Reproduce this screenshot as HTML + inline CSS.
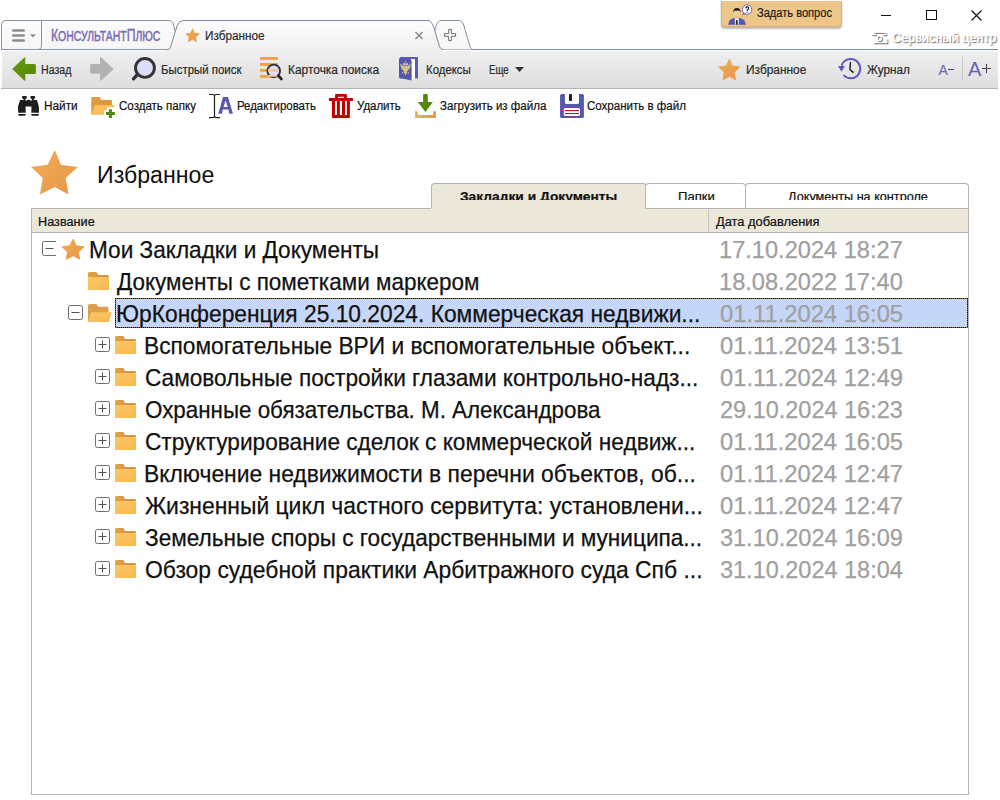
<!DOCTYPE html>
<html><head><meta charset="utf-8"><style>
html,body{margin:0;padding:0;width:1000px;height:800px;overflow:hidden;background:#fff;}
body{position:relative;font-family:"Liberation Sans", sans-serif;}
.t{position:absolute;white-space:pre;}
.a{position:absolute;}
svg{position:absolute;overflow:visible;}
</style></head><body>
<svg class="a" style="left:0;top:0" width="1000" height="52" viewBox="0 0 1000 52">
<defs>
<linearGradient id="tabg" x1="0" y1="0" x2="0" y2="1"><stop offset="0" stop-color="#fdfdfd"/><stop offset="1" stop-color="#f1f1f1"/></linearGradient>
<linearGradient id="tabi" x1="0" y1="0" x2="0" y2="1"><stop offset="0" stop-color="#fcfcfc"/><stop offset="1" stop-color="#f6f6f6"/></linearGradient>
</defs>
<!-- bottom line -->
<rect x="1" y="49" width="997" height="1" fill="#7d8b9c"/>
<!-- hamburger + konsultant tab -->
<path d="M1.5,49.5 L1.5,24.5 Q1.5,20.5 5.5,20.5 L169,20.5 Q172,20.5 173,23 L180,49.5 Z" fill="url(#tabi)" stroke="#8593a3" stroke-width="1"/>
<path d="M41.5,20.5 L41.5,46 Q41.5,49 38.5,49.5" fill="none" stroke="#8593a3" stroke-width="1"/>
<!-- plus tab -->
<path d="M434,34 C435.5,27 437,20.5 441,20.5 L459.5,20.5 C462,20.5 463,23 464,26 L469.5,45 C470.5,48 471.5,49.5 474,49.5 L438,49.5 Z" fill="url(#tabi)"/><path d="M434,34 C435.5,27 437,20.5 441,20.5 L459.5,20.5 C462,20.5 463,23 464,26 L469.5,45 C470.5,48 471.5,49.5 474,49.5" fill="none" stroke="#8593a3" stroke-width="1"/>
<!-- active tab -->
<path d="M167,50.5 Q169.5,50 170.5,47 L177,26 Q179,20.5 183,20.5 L428,20.5 C431,20.5 432.5,24 434,28 L439,45 C440,48 441,49.5 443.5,50.5 Z" fill="url(#tabg)"/><path d="M167,50 Q169.5,49.5 170.5,47 L177,26 Q179,20.5 183,20.5 L428,20.5 C431,20.5 432.5,24 434,28 L439,45 C440,48 441,49.5 443.5,49.5" fill="none" stroke="#7d8b9c" stroke-width="1"/>
<rect x="169" y="49.5" width="272" height="3" fill="#efefef"/>
<!-- hamburger bars -->
<rect x="12" y="29.2" width="13" height="2.6" rx="1.2" fill="#8c8c8c"/>
<rect x="12" y="34.2" width="13" height="2.6" rx="1.2" fill="#8c8c8c"/>
<rect x="12" y="39.2" width="13" height="2.6" rx="1.2" fill="#8c8c8c"/>
<path d="M30,34.2 L36,34.2 L33,37.5 Z" fill="#8c8c8c"/>
<!-- close x -->
<path d="M415.5,32 L422.5,39 M422.5,32 L415.5,39" stroke="#8a8a8a" stroke-width="1.6"/>
<!-- plus -->
<path d="M448.7,29.4 h2.6 v4.3 h4.3 v2.6 h-4.3 v4.3 h-2.6 v-4.3 h-4.3 v-2.6 h4.3 z" fill="#fff" stroke="#6a6a6a" stroke-width="1"/>
</svg>

<div class="t" style="left:51px;top:26.9px;font-size:17.4px;line-height:17px;color:#7a6db5;font-weight:normal;-webkit-text-stroke:0.5px #7a6db5;transform:scaleX(0.70);transform-origin:0 0;">К<span style="font-size:14.9px">ОНСУЛЬТАНТ</span>П<span style="font-size:14.9px">ЛЮС</span></div>
<svg style="left:184.5px;top:27.75px" width="15" height="14.25" viewBox="0 0 100 100" preserveAspectRatio="none"><defs><linearGradient id="sg1" x1="0" y1="0" x2="1" y2="1"><stop offset="0" stop-color="#f0ae52"/><stop offset="1" stop-color="#e8964a"/></linearGradient></defs><path d="M51,0 L64.2,33.1 L100,38.5 L74.3,63.2 L80.3,100 L51,83.3 L19.1,100 L25.2,63.2 L0,38.5 L35.8,33.1 Z" fill="url(#sg1)"/></svg>
<div class="t" style="left:204.52px;top:29.84px;font-size:12px;line-height:12px;color:#2b2b2b;font-weight:normal;transform:scaleX(0.9800);transform-origin:0 0;-webkit-text-stroke:0.2px #2b2b2b;">Избранное</div>
<div class="a" style="left:2px;top:51px;width:996px;height:37px;background:linear-gradient(#efefef,#dedede);"></div>
<div class="a" style="left:1px;top:88px;width:997px;height:1px;background:#b5b5b5;"></div>
<svg style="left:0;top:54px" width="40" height="32" viewBox="0 0 40 32"><defs><linearGradient id="gb" x1="0" y1="0" x2="1" y2="1"><stop offset="0" stop-color="#6a9c0c"/><stop offset="1" stop-color="#538506"/></linearGradient></defs><path d="M12.1,15 L24.6,3.3 Q25.3,2.8 25.3,3.8 L25.3,9.9 L34.4,9.9 Q35.9,9.9 35.9,11.4 L35.9,18.4 Q35.9,19.9 34.4,19.9 L25.3,19.9 L25.3,26.2 Q25.3,27.2 24.6,26.7 Z" fill="url(#gb)"/></svg>
<div class="t" style="left:41.12px;top:63.54px;font-size:12px;line-height:12px;color:#2a2a2a;font-weight:normal;transform:scaleX(0.8824);transform-origin:0 0;-webkit-text-stroke:0.2px #2a2a2a;">Назад</div>
<svg style="left:86px;top:54px" width="32" height="32" viewBox="0 0 32 32"><path d="M27.6,15 L15,3.3 Q14.06,2.8 14.06,3.8 L14.06,10.1 L5.6,10.1 Q4.1,10.1 4.1,11.6 L4.1,18.2 Q4.1,19.7 5.6,19.7 L14.06,19.7 L14.06,26.2 Q14.06,27.2 15,26.7 Z" fill="#b1b1b1"/></svg>
<svg style="left:128px;top:54px" width="32" height="32" viewBox="0 0 32 32"><circle cx="16.95" cy="13.9" r="9.45" fill="#dcdcfb" stroke="#333" stroke-width="2.9"/><path d="M9.3,20.6 L5.5,24.8" stroke="#333" stroke-width="3.4" stroke-linecap="round"/></svg>
<div class="t" style="left:161.05px;top:63.54px;font-size:12px;line-height:12px;color:#2a2a2a;font-weight:normal;transform:scaleX(0.9524);transform-origin:0 0;-webkit-text-stroke:0.2px #2a2a2a;">Быстрый поиск</div>
<svg style="left:255px;top:54px" width="32" height="32" viewBox="0 0 32 32"><g fill="#eea43a"><rect x="5.06" y="3" width="17.84" height="2.8"/><rect x="5.06" y="9" width="17.84" height="2.8"/><rect x="5.06" y="15" width="17.84" height="2.8"/><rect x="5.06" y="21" width="17.84" height="2.8"/></g><circle cx="18.75" cy="16.9" r="6.3" fill="#dcdcfb" stroke="#333" stroke-width="1.9"/><rect x="13" y="15" width="10" height="2.8" fill="#f2c890"/><rect x="13" y="21" width="10" height="1.8" fill="#f2c0a0"/><path d="M23.3,21.6 L26.4,25" stroke="#222" stroke-width="2.6" stroke-linecap="round"/></svg>
<div class="t" style="left:288.01px;top:63.54px;font-size:12px;line-height:12px;color:#2a2a2a;font-weight:normal;transform:scaleX(0.9934);transform-origin:0 0;-webkit-text-stroke:0.2px #2a2a2a;">Карточка поиска</div>
<svg style="left:394px;top:52px" width="30" height="32" viewBox="0 0 30 32"><path d="M6,5 L23,5 Q24,5 24,6 L24,26 Q24,26.6 23.4,26.6 L6,26.6 Z" fill="#5b5bb2"/><path d="M17,7 L21,7 L21,27 L17.5,27.5 Z" fill="#fff"/><path d="M5,6.2 L17.5,8.3 L17.5,28.5 L5,25.8 Z" fill="#5556b0"/><g fill="#d3c591"><path d="M6.3,11.5 Q6.5,16.5 9.8,19 L10.3,14.5 Q8.5,14 6.3,11.5 Z"/><path d="M16.7,11.5 Q16.5,16.5 13.2,19 L12.7,14.5 Q14.5,14 16.7,11.5 Z"/><circle cx="10.2" cy="12.2" r="1.3"/><circle cx="12.8" cy="12.2" r="1.3"/><path d="M11.5,8.8 L12.4,10.6 L10.6,10.6 Z"/><ellipse cx="11.5" cy="17" rx="2.2" ry="3.2"/><path d="M9.6,20 L13.4,20 L11.5,23.2 Z"/><path d="M8,19.5 L9.5,21 L8.5,22 Z"/><path d="M15,19.5 L13.5,21 L14.5,22 Z"/></g></svg>
<div class="t" style="left:426.05px;top:63.54px;font-size:12px;line-height:12px;color:#2a2a2a;font-weight:normal;transform:scaleX(0.9500);transform-origin:0 0;-webkit-text-stroke:0.2px #2a2a2a;">Кодексы</div>
<div class="t" style="left:488.59px;top:63.54px;font-size:12px;line-height:12px;color:#2a2a2a;font-weight:normal;transform:scaleX(0.8087);transform-origin:0 0;-webkit-text-stroke:0.2px #2a2a2a;">Еще</div>
<svg style="left:514.5px;top:67px" width="9" height="5" viewBox="0 0 9 5"><path d="M0,0 L9,0 L4.5,5 Z" fill="#333"/></svg>
<svg style="left:718px;top:57.5px" width="22.5" height="22.5" viewBox="0 0 100 100" preserveAspectRatio="none"><defs><linearGradient id="sg2" x1="0" y1="0" x2="1" y2="1"><stop offset="0" stop-color="#f0ae52"/><stop offset="1" stop-color="#e8964a"/></linearGradient></defs><path d="M51,0 L64.2,33.1 L100,38.5 L74.3,63.2 L80.3,100 L51,83.3 L19.1,100 L25.2,63.2 L0,38.5 L35.8,33.1 Z" fill="url(#sg2)"/></svg>
<div class="t" style="left:746.01px;top:63.54px;font-size:12px;line-height:12px;color:#2a2a2a;font-weight:normal;transform:scaleX(0.9917);transform-origin:0 0;-webkit-text-stroke:0.2px #2a2a2a;">Избранное</div>
<svg style="left:834px;top:54px" width="32" height="32" viewBox="0 0 32 32"><path d="M7.6,11.6 A9.6,9.6 0 1 1 9.6,21.1" fill="none" stroke="#5d5ab6" stroke-width="1.9"/><path d="M4.1,12 L10.9,12 L7.5,17.8 Z" fill="#5d5ab6"/><path d="M16.5,8 L15.9,15.5 L19.5,18.6" fill="none" stroke="#1a1a1a" stroke-width="1.4"/></svg>
<div class="t" style="left:867.40px;top:63.54px;font-size:12px;line-height:12px;color:#2a2a2a;font-weight:normal;transform:scaleX(0.9767);transform-origin:0 0;-webkit-text-stroke:0.2px #2a2a2a;">Журнал</div>
<div class="t" style="left:938.50px;top:62.75px;font-size:14px;line-height:14px;color:#6763b8;font-weight:normal;">A</div>
<div class="a" style="left:948px;top:69px;width:6px;height:1.2px;background:#444"></div>
<div class="a" style="left:962px;top:57px;width:1px;height:23px;background:#c8c8c8"></div>
<div class="t" style="left:968.00px;top:58.57px;font-size:20px;line-height:20px;color:#6763b8;font-weight:normal;">A</div>
<div class="a" style="left:982px;top:67.5px;width:9px;height:1.5px;background:#444"></div>
<div class="a" style="left:985.8px;top:63.7px;width:1.5px;height:9px;background:#444"></div>
<svg style="left:14px;top:92px" width="30" height="28" viewBox="0 0 30 28"><g fill="#1e1e1e"><rect x="8" y="4" width="4.8" height="2.7" rx="1"/><rect x="16.3" y="4" width="4.8" height="2.7" rx="1"/><rect x="9.5" y="6" width="2" height="2.5"/><rect x="17.8" y="6" width="2" height="2.5"/><path d="M6.1,8 L11.5,8 L11.5,9 L14.5,7.5 L17.5,9 L17.5,8 L22.9,8 L24.9,14.4 L25,20.7 L17.3,20.7 L17.5,14.5 L11.5,14.5 L11.8,20.7 L4.2,20.7 L4,14.4 Z"/><path d="M4.2,22 L11.8,22 L11.4,23.4 Q11,23.8 10.4,23.8 L5.6,23.8 Q5,23.8 4.6,23.4 Z"/><path d="M17.2,22 L25,22 L24.6,23.4 Q24.2,23.8 23.6,23.8 L18.6,23.8 Q18,23.8 17.6,23.4 Z"/></g></svg>
<div class="t" style="left:44.02px;top:99.84px;font-size:12px;line-height:12px;color:#111;font-weight:normal;transform:scaleX(0.9848);transform-origin:0 0;-webkit-text-stroke:0.2px #111;">Найти</div>
<svg style="left:86px;top:92px" width="30" height="28" viewBox="0 0 30 28"><defs><linearGradient id="fo1" x1="0" y1="0" x2="1" y2="1"><stop offset="0" stop-color="#fcc464"/><stop offset="1" stop-color="#f6b450"/></linearGradient><linearGradient id="fo2" x1="0" y1="0" x2="1" y2="1"><stop offset="0" stop-color="#e0a040"/><stop offset="1" stop-color="#d88a3a"/></linearGradient></defs><path d="M5.25,5.8 Q5.25,4.9 6.2,4.9 L14,4.9 L15,8 L25,8 Q25.9,8 25.9,8.9 L25.9,13.3 L9,13.3 L6.5,22.75 L5.25,22.75 Z" fill="url(#fo2)"/><path d="M8.8,13 L27.5,13 Q28.5,13 28.5,14 L28.5,15.2 L21,15.2 L21,17.9 L17.85,17.9 L17.85,22.75 L5.25,22.75 Z" fill="url(#fo1)"/><path d="M22.9,17.15 h3 v2.95 h3 v2.8 h-3 v3 h-3 v-3 h-2.9 v-2.8 h2.9 z" fill="#4a8a0c"/></svg>
<div class="t" style="left:118.54px;top:99.84px;font-size:12px;line-height:12px;color:#111;font-weight:normal;transform:scaleX(0.9620);transform-origin:0 0;-webkit-text-stroke:0.2px #111;">Создать папку</div>
<svg style="left:204px;top:90px" width="34" height="30" viewBox="0 0 34 30"><path d="M5,4.5 L8.5,4.5 Q10.5,4.5 10.5,6 Q10.5,4.5 12.5,4.5 L15.9,4.5 M10.5,6 L10.5,26 M5,27.6 L8.5,27.6 Q10.5,27.6 10.5,26 Q10.5,27.6 12.5,27.6 L15.9,27.6" fill="none" stroke="#1e1e1e" stroke-width="1.2"/><path d="M14.25,23.8 L19.1,7.1 L24,7.1 L28.9,23.8 L25.3,23.8 L24.4,19.6 L18.8,19.6 L17.9,23.8 Z M19.6,17 L23.6,17 L21.6,10.5 Z" fill="#5b57b0" fill-rule="evenodd"/></svg>
<div class="t" style="left:236.55px;top:99.84px;font-size:12px;line-height:12px;color:#111;font-weight:normal;transform:scaleX(0.9512);transform-origin:0 0;-webkit-text-stroke:0.2px #111;">Редактировать</div>
<svg style="left:324px;top:90px" width="34" height="30" viewBox="0 0 34 30"><g fill="#c10000"><path d="M12,3.9 L21.9,3.9 Q22.9,3.9 22.9,4.9 L22.9,8.1 L19.9,8.1 L19.9,6.75 L14.06,6.75 L14.06,8.1 L11.06,8.1 L11.06,4.9 Q11.06,3.9 12,3.9 Z"/><rect x="4.9" y="8.06" width="24" height="2.9"/><path d="M7.95,10.95 L25.9,10.95 L25.9,27.9 L7.95,27.9 Z M10.95,10.95 L10.95,24.9 L12.9,24.9 L12.9,10.95 Z M15.9,10.95 L15.9,24.9 L18,24.9 L18,10.95 Z M21,10.95 L21,24.9 L22.9,24.9 L22.9,10.95 Z" fill-rule="evenodd"/></g></svg>
<div class="t" style="left:356.55px;top:99.84px;font-size:12px;line-height:12px;color:#111;font-weight:normal;transform:scaleX(0.9545);transform-origin:0 0;-webkit-text-stroke:0.2px #111;">Удалить</div>
<svg style="left:410px;top:90px" width="34" height="30" viewBox="0 0 34 30"><defs><linearGradient id="dl" x1="0" y1="0" x2="1" y2="0"><stop offset="0" stop-color="#f0b048"/><stop offset="1" stop-color="#e8963e"/></linearGradient></defs><path d="M14.1,3.9 L16.8,3.9 Q17.8,3.9 17.8,4.9 L17.8,12 L22.9,12 L15.4,21.9 L7.9,12 L13.1,12 L13.1,4.9 Q13.1,3.9 14.1,3.9 Z" fill="#508a04"/><path d="M5.06,21.2 L7.86,21.2 L7.86,24.9 L23.1,24.9 L23.1,21.2 L25.9,21.2 L25.9,27.9 L5.06,27.9 Z" fill="url(#dl)"/></svg>
<div class="t" style="left:439.84px;top:99.84px;font-size:12px;line-height:12px;color:#111;font-weight:normal;transform:scaleX(0.9618);transform-origin:0 0;-webkit-text-stroke:0.2px #111;">Загрузить из файла</div>
<svg style="left:555px;top:90px" width="34" height="30" viewBox="0 0 34 30"><path d="M6.5,3.9 L27.4,3.9 Q28.9,3.9 28.9,5.4 L28.9,26.4 Q28.9,27.9 27.4,27.9 L6.56,27.9 Q5.06,27.9 5.06,26.4 L5.06,5.4 Q5.06,3.9 6.5,3.9 Z" fill="#5457ae"/><path d="M9.9,3.9 L24,3.9 L24,12.6 Q24,14.06 22.6,14.06 L11.3,14.06 Q9.9,14.06 9.9,12.6 Z" fill="#fff"/><rect x="14.06" y="4.1" width="2.84" height="6.8" fill="#151515"/><rect x="8.8" y="18" width="16.1" height="7.9" rx="1.4" fill="#fff"/><rect x="9.9" y="20.1" width="14.1" height="1" fill="#c80000"/><rect x="9.9" y="23.06" width="14.1" height="1" fill="#c80000"/></svg>
<div class="t" style="left:587.04px;top:99.84px;font-size:12px;line-height:12px;color:#111;font-weight:normal;transform:scaleX(0.9604);transform-origin:0 0;-webkit-text-stroke:0.2px #111;">Сохранить в файл</div>
<div class="a" style="left:880.5px;top:14.5px;width:10.5px;height:1px;background:#111"></div>
<div class="a" style="left:926px;top:9.5px;width:8.5px;height:8.5px;border:1px solid #111"></div>
<svg style="left:971px;top:9.5px" width="11" height="11" viewBox="0 0 11 11"><path d="M0.5,0.5 L10.5,10.5 M10.5,0.5 L0.5,10.5" stroke="#111" stroke-width="1.1"/></svg>
<div class="a" style="left:721px;top:1px;width:119px;height:25px;background:#ecc789;border:1px solid #dcb070;border-top:none;border-radius:0 0 4px 4px;box-shadow:0 1.5px 2px rgba(0,0,0,0.28)"></div>
<svg style="left:722px;top:0px" width="34" height="30" viewBox="0 0 34 30"><path d="M6,24.75 L7.5,20.5 Q9,18.6 12.3,18 L17.5,18 Q21,18.6 22.5,20.5 L24,24.75 Z" fill="#5656b6"/><path d="M12.8,18.2 L16.9,18.2 L16.6,24.75 L13.1,24.75 Z" fill="#fff"/><path d="M14,20 L15.6,20 L15.8,24.75 L13.8,24.75 Z" fill="#2a2a2a"/><ellipse cx="14.9" cy="13.6" rx="2.8" ry="3.6" fill="#f1cd9a"/><rect x="13.6" y="16" width="2.6" height="2.4" fill="#eab88a"/><path d="M11.1,13.5 Q10.8,8 14.9,8 Q19,8 18.9,13.5 Q18.5,11 17.8,10.8 L12.2,10.8 Q11.5,11 11.1,13.5 Z" fill="#222"/><path d="M22.5,12.5 L20.3,14.7 L23.8,13.6 Z" fill="#fff" stroke="#5656b6" stroke-width="0.7"/><circle cx="25.1" cy="9.56" r="4.7" fill="#fff" stroke="#5a58c0" stroke-width="0.9"/><path d="M23.6,8.4 Q23.8,6.8 25.3,6.8 Q26.8,6.9 26.6,8.3 Q26.4,9.2 25.3,9.9 L25.2,11" fill="none" stroke="#1a1a1a" stroke-width="1.2"/><rect x="24.7" y="11.6" width="1" height="1.1" fill="#1a1a1a"/></svg>
<div class="t" style="left:757.38px;top:6.64px;font-size:12px;line-height:12px;color:#1a1a1a;font-weight:normal;transform:scaleX(0.9238);transform-origin:0 0;-webkit-text-stroke:0.2px #1a1a1a;">Задать вопрос</div>
<svg style="left:868px;top:28px" width="24" height="20" viewBox="0 0 24 20"><g fill="none" stroke="#555" transform="translate(0.8,0.9)" opacity="0.85"><path d="M5.5,5.2 Q11,3 18.5,5.2" stroke-width="1.4"/><path d="M3.6,6.6 h4.6" stroke-width="1.2"/><path d="M14.5,6.6 h4" stroke-width="1.2"/><circle cx="11.5" cy="10.2" r="2.3" stroke-width="1.2"/><path d="M5.6,14.6 h13.3 v-4" stroke-width="1.3"/></g><g fill="none" stroke="#fff"><path d="M5.5,5.2 Q11,3 18.5,5.2" stroke-width="1.4"/><path d="M3.6,6.6 h4.6" stroke-width="1.2"/><path d="M14.5,6.6 h4" stroke-width="1.2"/><circle cx="11.5" cy="10.2" r="2.3" stroke-width="1.2"/><path d="M5.6,14.6 h13.3 v-4" stroke-width="1.3"/></g></svg>
<div class="t" style="left:891.67px;top:32.49px;font-size:12.3px;line-height:12.3px;color:#fff;font-weight:normal;transform:scaleX(1.0330);transform-origin:0 0;-webkit-text-stroke:0.6px #fff;text-shadow:1px 1px 1.3px #262626;">Сервисный центр</div>
<svg style="left:31.2px;top:150.2px" width="46.7" height="44.4" viewBox="0 0 100 100" preserveAspectRatio="none"><defs><linearGradient id="sg3" x1="0" y1="0" x2="1" y2="1"><stop offset="0" stop-color="#f0ae52"/><stop offset="1" stop-color="#e8964a"/></linearGradient></defs><path d="M51,0 L64.2,33.1 L100,38.5 L74.3,63.2 L80.3,100 L51,83.3 L19.1,100 L25.2,63.2 L0,38.5 L35.8,33.1 Z" fill="url(#sg3)"/></svg>
<div class="t" style="left:96.83px;top:163.91px;font-size:23.5px;line-height:23.5px;color:#111;font-weight:normal;transform:scaleX(0.9845);transform-origin:0 0;">Избранное</div>
<div class="a" style="left:431px;top:183px;width:214px;height:27px;background:#ebe7d9;border:1px solid #b4b4b4;border-bottom:none;border-radius:4px 4px 0 0;"></div>
<div class="a" style="left:645px;top:183px;width:99px;height:24px;background:#fff;border:1px solid #b4b4b4;border-bottom:none;border-radius:4px 4px 0 0;"></div>
<div class="a" style="left:745px;top:183px;width:222px;height:24px;background:#fff;border:1px solid #b4b4b4;border-bottom:none;border-radius:4px 4px 0 0;"></div>
<div class="a" style="left:432px;top:184px;width:213px;height:16px;overflow:hidden">
<div class="t" style="left:27.85px;top:6.84px;font-size:12px;line-height:12px;color:#111;font-weight:bold;transform:scaleX(1.1471);transform-origin:0 0;-webkit-text-stroke:0.2px #111;">Закладки и Документы</div>
</div>
<div class="a" style="left:646px;top:184px;width:98px;height:16px;overflow:hidden">
<div class="t" style="left:31.91px;top:6.84px;font-size:12px;line-height:12px;color:#111;font-weight:normal;transform:scaleX(1.0938);transform-origin:0 0;-webkit-text-stroke:0.2px #111;">Папки</div>
</div>
<div class="a" style="left:746px;top:184px;width:221px;height:16px;overflow:hidden">
<div class="t" style="left:42.00px;top:6.84px;font-size:12px;line-height:12px;color:#111;font-weight:normal;transform:scaleX(1.0530);transform-origin:0 0;-webkit-text-stroke:0.2px #111;">Документы на контроле</div>
</div>
<div class="a" style="left:31px;top:208px;width:936px;height:585px;border:1px solid #b4b4b4;background:#fff"></div>
<div class="a" style="left:32px;top:209px;width:936px;height:23px;background:#ebe7d9;border-bottom:1px solid #b4b4b4"></div>
<div class="a" style="left:431px;top:208px;width:214px;height:2px;background:#ebe7d9"></div>
<div class="a" style="left:708px;top:209px;width:1px;height:23px;background:#c8c8c8"></div>
<div class="t" style="left:38.34px;top:215.84px;font-size:12px;line-height:12px;color:#111;font-weight:normal;transform:scaleX(1.0577);transform-origin:0 0;-webkit-text-stroke:0.2px #111;">Название</div>
<div class="t" style="left:715.50px;top:215.84px;font-size:12px;line-height:12px;color:#111;font-weight:normal;transform:scaleX(1.0729);transform-origin:0 0;-webkit-text-stroke:0.2px #111;">Дата добавления</div>
<div class="a" style="left:115px;top:298px;width:853px;height:30px;background:#c6d6f8;"></div>
<div class="a" style="left:115px;top:298px;width:853px;height:1px;background:repeating-linear-gradient(90deg,#111 0 1px,#7a6a3a 1px 2px)"></div>
<div class="a" style="left:115px;top:327px;width:853px;height:1px;background:repeating-linear-gradient(90deg,#111 0 1px,#7a6a3a 1px 2px)"></div>
<div class="a" style="left:115px;top:298px;width:1px;height:30px;background:repeating-linear-gradient(180deg,#111 0 1px,#7a6a3a 1px 2px)"></div>
<div class="a" style="left:967px;top:298px;width:1px;height:30px;background:repeating-linear-gradient(180deg,#111 0 1px,#7a6a3a 1px 2px)"></div>
<svg style="left:41.5px;top:241px" width="15" height="15" viewBox="0 0 15 15"><path d="M14,0.5 L2.3,0.5 Q0.5,0.5 0.5,2.3 L0.5,12.7 Q0.5,14.5 2.3,14.5 L14,14.5" fill="none" stroke="#6e6e6e" stroke-width="1"/><path d="M3.5,7.5 h8" stroke="#555" stroke-width="1"/></svg>
<svg style="left:61px;top:238px" width="24" height="22" viewBox="0 0 100 100" preserveAspectRatio="none"><defs><linearGradient id="sgr" x1="0" y1="0" x2="1" y2="1"><stop offset="0" stop-color="#f0ae52"/><stop offset="1" stop-color="#e8964a"/></linearGradient></defs><path d="M51,0 L64.2,33.1 L100,38.5 L74.3,63.2 L80.3,100 L51,83.3 L19.1,100 L25.2,63.2 L0,38.5 L35.8,33.1 Z" fill="url(#sgr)"/></svg>
<div class="t" style="left:88.92px;top:237.98px;font-size:24px;line-height:24px;color:#111;font-weight:normal;transform:scaleX(0.9416);transform-origin:0 0;-webkit-text-stroke:0.25px #111;">Мои Закладки и Документы</div>
<div class="t" style="left:719.03px;top:237.98px;font-size:24px;line-height:24px;color:#a0a0a0;font-weight:normal;transform:scaleX(0.9837);transform-origin:0 0;-webkit-text-stroke:0.25px #a0a0a0;">17.10.2024 18:27</div>
<svg style="left:88px;top:272px" width="21" height="18" viewBox="0 0 21 18"><defs><linearGradient id="fcl" x1="0" y1="0" x2="1" y2="1"><stop offset="0" stop-color="#fcc868"/><stop offset="1" stop-color="#f6b850"/></linearGradient></defs><defs><linearGradient id="fbk" x1="0" y1="0" x2="1" y2="0"><stop offset="0" stop-color="#dca444"/><stop offset="1" stop-color="#d8903a"/></linearGradient></defs><path d="M0,1.5 Q0,0 1.5,0 L8.5,0 L10,3 L20,3 L21,4 L21,6 L0,6 Z" fill="url(#fbk)"/><path d="M0,5 L21,5 L21,18 L0,18 Z" fill="url(#fcl)"/></svg>
<div class="t" style="left:117.00px;top:269.98px;font-size:24px;line-height:24px;color:#111;font-weight:normal;transform:scaleX(0.9370);transform-origin:0 0;-webkit-text-stroke:0.25px #111;">Документы с пометками маркером</div>
<div class="t" style="left:719.03px;top:269.98px;font-size:24px;line-height:24px;color:#a0a0a0;font-weight:normal;transform:scaleX(0.9837);transform-origin:0 0;-webkit-text-stroke:0.25px #a0a0a0;">18.08.2022 17:40</div>
<svg style="left:68px;top:305px" width="15" height="15" viewBox="0 0 15 15"><rect x="0.5" y="0.5" width="14" height="14" rx="1.8" fill="#fff" stroke="#6e6e6e" stroke-width="1"/><path d="M3.5,7.5 h8" stroke="#555" stroke-width="1"/></svg>
<svg style="left:88px;top:304px" width="24" height="18" viewBox="0 0 24 18"><defs><linearGradient id="fop" x1="0" y1="0" x2="1" y2="1"><stop offset="0" stop-color="#fcc868"/><stop offset="1" stop-color="#f6b850"/></linearGradient></defs><path d="M0,1.5 Q0,0 1.5,0 L8.5,0 L10,2.8 L19.5,2.8 Q20.5,2.8 20.5,3.8 L20.5,9 L0,18 Z" fill="#dba048"/><path d="M3,8.2 L23.8,8.2 L20.8,18 L0,18 Z" fill="url(#fop)"/></svg>
<div class="t" style="left:116.10px;top:301.98px;font-size:24px;line-height:24px;color:#111;font-weight:normal;transform:scaleX(0.9493);transform-origin:0 0;-webkit-text-stroke:0.25px #111;">ЮрКонференция 25.10.2024. Коммерческая недвижи...</div>
<div class="t" style="left:720.01px;top:301.98px;font-size:24px;line-height:24px;color:#a0a0a0;font-weight:normal;transform:scaleX(0.9891);transform-origin:0 0;-webkit-text-stroke:0.25px #a0a0a0;">01.11.2024 16:05</div>
<svg style="left:95px;top:337px" width="15" height="15" viewBox="0 0 15 15"><rect x="0.5" y="0.5" width="14" height="14" rx="1.8" fill="#fff" stroke="#6e6e6e" stroke-width="1"/><path d="M3.5,7.5 h8" stroke="#555" stroke-width="1"/><path d="M7.5,3.5 v8" stroke="#555" stroke-width="1"/></svg>
<svg style="left:115px;top:336px" width="21" height="18" viewBox="0 0 21 18"><defs><linearGradient id="fcl" x1="0" y1="0" x2="1" y2="1"><stop offset="0" stop-color="#fcc868"/><stop offset="1" stop-color="#f6b850"/></linearGradient></defs><defs><linearGradient id="fbk" x1="0" y1="0" x2="1" y2="0"><stop offset="0" stop-color="#dca444"/><stop offset="1" stop-color="#d8903a"/></linearGradient></defs><path d="M0,1.5 Q0,0 1.5,0 L8.5,0 L10,3 L20,3 L21,4 L21,6 L0,6 Z" fill="url(#fbk)"/><path d="M0,5 L21,5 L21,18 L0,18 Z" fill="url(#fcl)"/></svg>
<div class="t" style="left:143.61px;top:333.98px;font-size:24px;line-height:24px;color:#111;font-weight:normal;transform:scaleX(0.9461);transform-origin:0 0;-webkit-text-stroke:0.25px #111;">Вспомогательные ВРИ и вспомогательные объект...</div>
<div class="t" style="left:720.01px;top:333.98px;font-size:24px;line-height:24px;color:#a0a0a0;font-weight:normal;transform:scaleX(0.9891);transform-origin:0 0;-webkit-text-stroke:0.25px #a0a0a0;">01.11.2024 13:51</div>
<svg style="left:95px;top:369px" width="15" height="15" viewBox="0 0 15 15"><rect x="0.5" y="0.5" width="14" height="14" rx="1.8" fill="#fff" stroke="#6e6e6e" stroke-width="1"/><path d="M3.5,7.5 h8" stroke="#555" stroke-width="1"/><path d="M7.5,3.5 v8" stroke="#555" stroke-width="1"/></svg>
<svg style="left:115px;top:368px" width="21" height="18" viewBox="0 0 21 18"><defs><linearGradient id="fcl" x1="0" y1="0" x2="1" y2="1"><stop offset="0" stop-color="#fcc868"/><stop offset="1" stop-color="#f6b850"/></linearGradient></defs><defs><linearGradient id="fbk" x1="0" y1="0" x2="1" y2="0"><stop offset="0" stop-color="#dca444"/><stop offset="1" stop-color="#d8903a"/></linearGradient></defs><path d="M0,1.5 Q0,0 1.5,0 L8.5,0 L10,3 L20,3 L21,4 L21,6 L0,6 Z" fill="url(#fbk)"/><path d="M0,5 L21,5 L21,18 L0,18 Z" fill="url(#fcl)"/></svg>
<div class="t" style="left:144.56px;top:365.98px;font-size:24px;line-height:24px;color:#111;font-weight:normal;transform:scaleX(0.9433);transform-origin:0 0;-webkit-text-stroke:0.25px #111;">Самовольные постройки глазами контрольно-надз...</div>
<div class="t" style="left:720.01px;top:365.98px;font-size:24px;line-height:24px;color:#a0a0a0;font-weight:normal;transform:scaleX(0.9891);transform-origin:0 0;-webkit-text-stroke:0.25px #a0a0a0;">01.11.2024 12:49</div>
<svg style="left:95px;top:401px" width="15" height="15" viewBox="0 0 15 15"><rect x="0.5" y="0.5" width="14" height="14" rx="1.8" fill="#fff" stroke="#6e6e6e" stroke-width="1"/><path d="M3.5,7.5 h8" stroke="#555" stroke-width="1"/><path d="M7.5,3.5 v8" stroke="#555" stroke-width="1"/></svg>
<svg style="left:115px;top:400px" width="21" height="18" viewBox="0 0 21 18"><defs><linearGradient id="fcl" x1="0" y1="0" x2="1" y2="1"><stop offset="0" stop-color="#fcc868"/><stop offset="1" stop-color="#f6b850"/></linearGradient></defs><defs><linearGradient id="fbk" x1="0" y1="0" x2="1" y2="0"><stop offset="0" stop-color="#dca444"/><stop offset="1" stop-color="#d8903a"/></linearGradient></defs><path d="M0,1.5 Q0,0 1.5,0 L8.5,0 L10,3 L20,3 L21,4 L21,6 L0,6 Z" fill="url(#fbk)"/><path d="M0,5 L21,5 L21,18 L0,18 Z" fill="url(#fcl)"/></svg>
<div class="t" style="left:144.57px;top:397.98px;font-size:24px;line-height:24px;color:#111;font-weight:normal;transform:scaleX(0.9320);transform-origin:0 0;-webkit-text-stroke:0.25px #111;">Охранные обязательства. М. Александрова</div>
<div class="t" style="left:720.02px;top:397.98px;font-size:24px;line-height:24px;color:#a0a0a0;font-weight:normal;transform:scaleX(0.9784);transform-origin:0 0;-webkit-text-stroke:0.25px #a0a0a0;">29.10.2024 16:23</div>
<svg style="left:95px;top:433px" width="15" height="15" viewBox="0 0 15 15"><rect x="0.5" y="0.5" width="14" height="14" rx="1.8" fill="#fff" stroke="#6e6e6e" stroke-width="1"/><path d="M3.5,7.5 h8" stroke="#555" stroke-width="1"/><path d="M7.5,3.5 v8" stroke="#555" stroke-width="1"/></svg>
<svg style="left:115px;top:432px" width="21" height="18" viewBox="0 0 21 18"><defs><linearGradient id="fcl" x1="0" y1="0" x2="1" y2="1"><stop offset="0" stop-color="#fcc868"/><stop offset="1" stop-color="#f6b850"/></linearGradient></defs><defs><linearGradient id="fbk" x1="0" y1="0" x2="1" y2="0"><stop offset="0" stop-color="#dca444"/><stop offset="1" stop-color="#d8903a"/></linearGradient></defs><path d="M0,1.5 Q0,0 1.5,0 L8.5,0 L10,3 L20,3 L21,4 L21,6 L0,6 Z" fill="url(#fbk)"/><path d="M0,5 L21,5 L21,18 L0,18 Z" fill="url(#fcl)"/></svg>
<div class="t" style="left:144.56px;top:429.98px;font-size:24px;line-height:24px;color:#111;font-weight:normal;transform:scaleX(0.9445);transform-origin:0 0;-webkit-text-stroke:0.25px #111;">Структурирование сделок с коммерческой недвиж...</div>
<div class="t" style="left:720.01px;top:429.98px;font-size:24px;line-height:24px;color:#a0a0a0;font-weight:normal;transform:scaleX(0.9891);transform-origin:0 0;-webkit-text-stroke:0.25px #a0a0a0;">01.11.2024 16:05</div>
<svg style="left:95px;top:465px" width="15" height="15" viewBox="0 0 15 15"><rect x="0.5" y="0.5" width="14" height="14" rx="1.8" fill="#fff" stroke="#6e6e6e" stroke-width="1"/><path d="M3.5,7.5 h8" stroke="#555" stroke-width="1"/><path d="M7.5,3.5 v8" stroke="#555" stroke-width="1"/></svg>
<svg style="left:115px;top:464px" width="21" height="18" viewBox="0 0 21 18"><defs><linearGradient id="fcl" x1="0" y1="0" x2="1" y2="1"><stop offset="0" stop-color="#fcc868"/><stop offset="1" stop-color="#f6b850"/></linearGradient></defs><defs><linearGradient id="fbk" x1="0" y1="0" x2="1" y2="0"><stop offset="0" stop-color="#dca444"/><stop offset="1" stop-color="#d8903a"/></linearGradient></defs><path d="M0,1.5 Q0,0 1.5,0 L8.5,0 L10,3 L20,3 L21,4 L21,6 L0,6 Z" fill="url(#fbk)"/><path d="M0,5 L21,5 L21,18 L0,18 Z" fill="url(#fcl)"/></svg>
<div class="t" style="left:143.60px;top:461.98px;font-size:24px;line-height:24px;color:#111;font-weight:normal;transform:scaleX(0.9523);transform-origin:0 0;-webkit-text-stroke:0.25px #111;">Включение недвижимости в перечни объектов, об...</div>
<div class="t" style="left:720.01px;top:461.98px;font-size:24px;line-height:24px;color:#a0a0a0;font-weight:normal;transform:scaleX(0.9891);transform-origin:0 0;-webkit-text-stroke:0.25px #a0a0a0;">01.11.2024 12:47</div>
<svg style="left:95px;top:497px" width="15" height="15" viewBox="0 0 15 15"><rect x="0.5" y="0.5" width="14" height="14" rx="1.8" fill="#fff" stroke="#6e6e6e" stroke-width="1"/><path d="M3.5,7.5 h8" stroke="#555" stroke-width="1"/><path d="M7.5,3.5 v8" stroke="#555" stroke-width="1"/></svg>
<svg style="left:115px;top:496px" width="21" height="18" viewBox="0 0 21 18"><defs><linearGradient id="fcl" x1="0" y1="0" x2="1" y2="1"><stop offset="0" stop-color="#fcc868"/><stop offset="1" stop-color="#f6b850"/></linearGradient></defs><defs><linearGradient id="fbk" x1="0" y1="0" x2="1" y2="0"><stop offset="0" stop-color="#dca444"/><stop offset="1" stop-color="#d8903a"/></linearGradient></defs><path d="M0,1.5 Q0,0 1.5,0 L8.5,0 L10,3 L20,3 L21,4 L21,6 L0,6 Z" fill="url(#fbk)"/><path d="M0,5 L21,5 L21,18 L0,18 Z" fill="url(#fcl)"/></svg>
<div class="t" style="left:144.55px;top:493.98px;font-size:24px;line-height:24px;color:#111;font-weight:normal;transform:scaleX(0.9527);transform-origin:0 0;-webkit-text-stroke:0.25px #111;">Жизненный цикл частного сервитута: установлени...</div>
<div class="t" style="left:720.01px;top:493.98px;font-size:24px;line-height:24px;color:#a0a0a0;font-weight:normal;transform:scaleX(0.9891);transform-origin:0 0;-webkit-text-stroke:0.25px #a0a0a0;">01.11.2024 12:47</div>
<svg style="left:95px;top:529px" width="15" height="15" viewBox="0 0 15 15"><rect x="0.5" y="0.5" width="14" height="14" rx="1.8" fill="#fff" stroke="#6e6e6e" stroke-width="1"/><path d="M3.5,7.5 h8" stroke="#555" stroke-width="1"/><path d="M7.5,3.5 v8" stroke="#555" stroke-width="1"/></svg>
<svg style="left:115px;top:528px" width="21" height="18" viewBox="0 0 21 18"><defs><linearGradient id="fcl" x1="0" y1="0" x2="1" y2="1"><stop offset="0" stop-color="#fcc868"/><stop offset="1" stop-color="#f6b850"/></linearGradient></defs><defs><linearGradient id="fbk" x1="0" y1="0" x2="1" y2="0"><stop offset="0" stop-color="#dca444"/><stop offset="1" stop-color="#d8903a"/></linearGradient></defs><path d="M0,1.5 Q0,0 1.5,0 L8.5,0 L10,3 L20,3 L21,4 L21,6 L0,6 Z" fill="url(#fbk)"/><path d="M0,5 L21,5 L21,18 L0,18 Z" fill="url(#fcl)"/></svg>
<div class="t" style="left:144.56px;top:525.98px;font-size:24px;line-height:24px;color:#111;font-weight:normal;transform:scaleX(0.9414);transform-origin:0 0;-webkit-text-stroke:0.25px #111;">Земельные споры с государственными и муниципа...</div>
<div class="t" style="left:720.02px;top:525.98px;font-size:24px;line-height:24px;color:#a0a0a0;font-weight:normal;transform:scaleX(0.9784);transform-origin:0 0;-webkit-text-stroke:0.25px #a0a0a0;">31.10.2024 16:09</div>
<svg style="left:95px;top:561px" width="15" height="15" viewBox="0 0 15 15"><rect x="0.5" y="0.5" width="14" height="14" rx="1.8" fill="#fff" stroke="#6e6e6e" stroke-width="1"/><path d="M3.5,7.5 h8" stroke="#555" stroke-width="1"/><path d="M7.5,3.5 v8" stroke="#555" stroke-width="1"/></svg>
<svg style="left:115px;top:560px" width="21" height="18" viewBox="0 0 21 18"><defs><linearGradient id="fcl" x1="0" y1="0" x2="1" y2="1"><stop offset="0" stop-color="#fcc868"/><stop offset="1" stop-color="#f6b850"/></linearGradient></defs><defs><linearGradient id="fbk" x1="0" y1="0" x2="1" y2="0"><stop offset="0" stop-color="#dca444"/><stop offset="1" stop-color="#d8903a"/></linearGradient></defs><path d="M0,1.5 Q0,0 1.5,0 L8.5,0 L10,3 L20,3 L21,4 L21,6 L0,6 Z" fill="url(#fbk)"/><path d="M0,5 L21,5 L21,18 L0,18 Z" fill="url(#fcl)"/></svg>
<div class="t" style="left:144.55px;top:557.98px;font-size:24px;line-height:24px;color:#111;font-weight:normal;transform:scaleX(0.9527);transform-origin:0 0;-webkit-text-stroke:0.25px #111;">Обзор судебной практики Арбитражного суда Спб ...</div>
<div class="t" style="left:720.02px;top:557.98px;font-size:24px;line-height:24px;color:#a0a0a0;font-weight:normal;transform:scaleX(0.9784);transform-origin:0 0;-webkit-text-stroke:0.25px #a0a0a0;">31.10.2024 18:04</div>
</body></html>
